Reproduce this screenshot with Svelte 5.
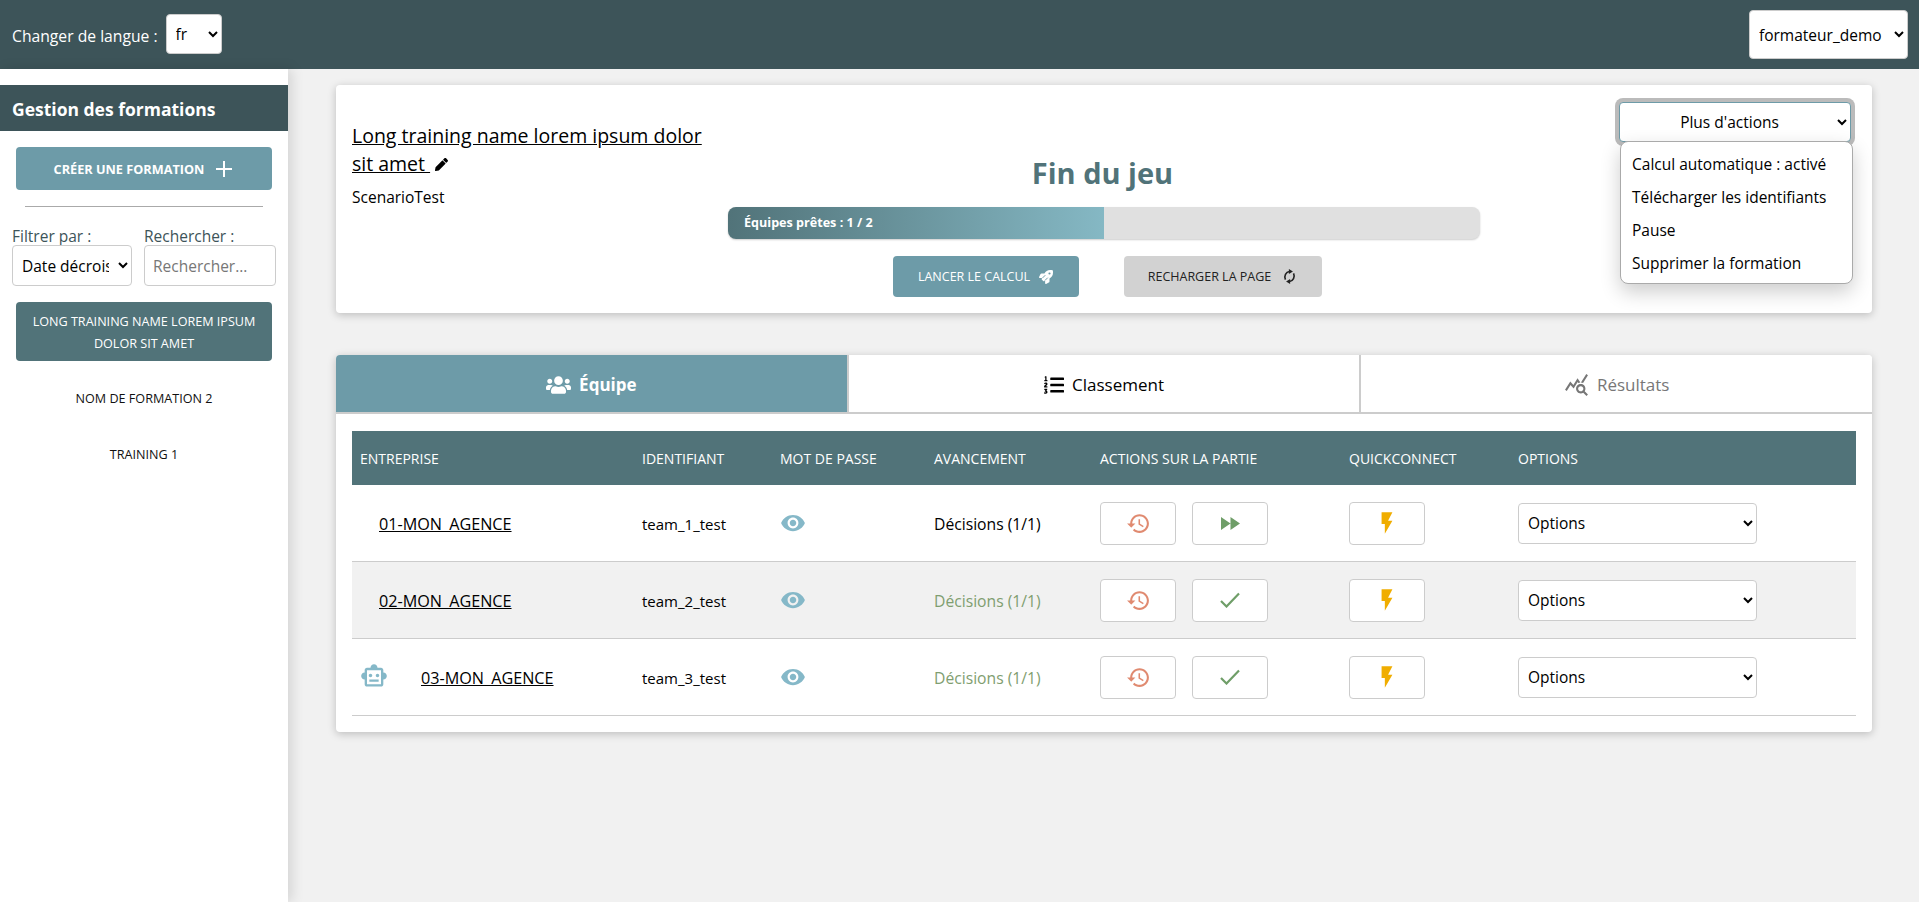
<script>
  const teams = [
    { name: '01-MON_AGENCE', id: 'team_1_test', done: false, bot: false },
    { name: '02-MON_AGENCE', id: 'team_2_test', done: true, bot: false },
    { name: '03-MON_AGENCE', id: 'team_3_test', done: true, bot: true }
  ];
  const columns = ['Entreprise', 'Identifiant', 'Mot de passe', 'Avancement', 'Actions sur la partie', 'Quickconnect', 'Options'];
  const trainings = ['Nom de formation 2', 'Training 1'];
  const menu = ['Calcul automatique : activé', 'Télécharger les identifiants', 'Pause', 'Supprimer la formation'];
  let tab = $state('team');
</script>

<div class="page">
  <header class="topbar">
    <div class="lang">
      <span>Changer de langue :</span>
      <select class="sel lang-sel"><option>fr</option><option>en</option></select>
    </div>
    <select class="sel user-sel"><option>formateur_demo</option></select>
  </header>

  <div class="body">
    <aside class="sidebar">
      <h2>Gestion des formations</h2>
      <div class="side-in">
        <button class="create">
          Créer une formation
          <svg viewBox="0 0 16 16" width="16" height="16"><path d="M8 0v16M0 8h16" stroke="#fff" stroke-width="2" fill="none"/></svg>
        </button>
        <hr />
        <div class="filters">
          <label class="f1">Filtrer par :
            <select class="sel"><option>Date décroissante</option></select>
          </label>
          <label class="f2">Rechercher :
            <input placeholder="Rechercher..." />
          </label>
        </div>
        <button class="training active">Long training name lorem ipsum dolor sit amet</button>
        {#each trainings as t}
          <button class="training">{t}</button>
        {/each}
      </div>
    </aside>

    <main>
      <section class="card head">
        <div class="info">
          <div class="name"><u>Long training name lorem ipsum dolor sit amet&nbsp;</u>
            <svg viewBox="0 0 512 512" width="13" height="13"><path d="M497.9 142.1l-46.1 46.1c-4.7 4.7-12.3 4.7-17 0l-111-111c-4.7-4.7-4.7-12.3 0-17l46.1-46.1c18.7-18.7 49.1-18.7 67.9 0l60.1 60.1c18.8 18.7 18.8 49.1 0 67.9zM284.2 99.8L21.6 362.4.4 483.9c-2.9 16.4 11.4 30.6 27.8 27.8l121.5-21.3 262.6-262.6c4.7-4.7 4.7-12.3 0-17l-111-111c-4.8-4.7-12.4-4.7-17.1 0z"/></svg>
          </div>
          <div class="scenario">ScenarioTest</div>
        </div>
        <div class="center">
          <h1>Fin du jeu</h1>
          <div class="progress">
            <div class="fill" style="width:50%">Équipes prêtes : 1 / 2</div>
          </div>
          <div class="btns">
            <button class="run">Lancer le calcul
              <svg viewBox="0 0 512 512" width="14" height="14"><path fill="#fff" d="M505.12019,19.09375c-1.18945-5.53125-6.65819-11-12.207-12.1875C460.716,0,435.507,0,410.40747,0,307.17523,0,245.26909,55.20312,199.05238,128H94.83772c-16.34763.01562-35.55658,11.875-42.88664,26.48438L2.51562,253.29688A28.4,28.4,0,0,0,0,264a24.00867,24.00867,0,0,0,24.00582,24H127.81618l-22.47457,22.46875c-11.36521,11.36133-12.99607,32.25781,0,45.25L156.24582,406.625c11.15623,11.1875,32.15619,13.15625,45.27726,0l22.47457-22.46875V488a24.00867,24.00867,0,0,0,24.00581,24,28.55934,28.55934,0,0,0,10.707-2.51562l98.72834-49.39063c14.62888-7.29687,26.50776-26.5,26.50776-42.85937V312.79688c72.59753-46.3125,128.03493-108.40626,128.03493-211.09376C512.07526,76.5,512.07526,51.29688,505.12019,19.09375ZM384.04033,168A40,40,0,1,1,424.05,128,40.02322,40.02322,0,0,1,384.04033,168Z"/><path d="M130 290L230 190M220 380L320 280" stroke="#6d9ba8" stroke-width="36"/></svg>
            </button>
            <button class="reload">Recharger la page
              <svg viewBox="0 0 24 24" width="15" height="15"><path d="M5.5 17A8.5 9 0 0 1 12 4M18.5 7A8.5 9 0 0 1 12 20" fill="none" stroke="#222" stroke-width="2.6"/><path fill="#222" d="M11 0l6.5 4-6.5 4zM13 16l-6.500 4 6.500 4z"/></svg>
            </button>
          </div>
        </div>
        <div class="more">
          <select class="sel more-sel"><option>Plus d'actions</option></select>
          <ul class="menu">
            {#each menu as m}<li>{m}</li>{/each}
          </ul>
        </div>
      </section>

      <section class="card teams">
        <div class="tabs">
          <button class="tab" class:on={tab === 'team'} onclick={() => tab = 'team'}>
            <svg viewBox="0 0 640 512" width="25" height="20"><path fill="currentColor" d="M96 224c35.3 0 64-28.7 64-64s-28.7-64-64-64-64 28.7-64 64 28.7 64 64 64zm448 0c35.3 0 64-28.7 64-64s-28.7-64-64-64-64 28.7-64 64 28.7 64 64 64zm32 32h-64c-17.6 0-33.5 7.1-45.1 18.6 40.3 22.1 68.9 62 75.1 109.4h66c17.7 0 32-14.3 32-32v-32c0-35.3-28.7-64-64-64zm-256 0c61.9 0 112-50.1 112-112S381.9 32 320 32 208 82.1 208 144s50.1 112 112 112zm76.8 32h-8.3c-20.8 10-43.9 16-68.5 16s-47.6-6-68.5-16h-8.3C179.6 288 128 339.6 128 403.2V432c0 26.5 21.5 48 48 48h288c26.5 0 48-21.5 48-48v-28.8c0-63.6-51.6-115.2-115.2-115.2zm-223.7-13.4C161.5 263.1 145.6 256 128 256H64c-35.3 0-64 28.7-64 64v32c0 17.7 14.3 32 32 32h65.9c6.3-47.4 34.9-87.3 75.2-109.4z"/></svg>
            Équipe
          </button>
          <button class="tab" class:on={tab === 'rank'} onclick={() => tab = 'rank'}>
            <svg viewBox="0 0 512 512" width="20" height="20"><path fill="currentColor" d="M61.77 401l17.5-20.15a19.92 19.92 0 0 0 5.07-14.19v-3.31C84.34 356 80.5 352 73 352H16a8 8 0 0 0-8 8v16a8 8 0 0 0 8 8h22.83a157.41 157.41 0 0 0-11 12.31l-5.61 7c-4 5.07-5.25 10.13-2.8 14.88l1.05 1.93c3 5.76 6.29 7.88 12.25 7.88h4.73c10.33 0 15.94 2.44 15.94 9.09 0 4.72-4.2 8.22-14.36 8.22a41.54 41.54 0 0 1-15.47-3.12c-6.49-3.88-11.74-3.5-15.6 3.12l-5.59 9.31c-3.72 6.13-3.19 11.72 2.63 15.94 7.71 4.69 20.38 9.44 37 9.44 34.16 0 48.5-22.75 48.5-44.12-.03-14.38-9.12-29.76-28.73-34.88zM496 224H176a16 16 0 0 0-16 16v32a16 16 0 0 0 16 16h320a16 16 0 0 0 16-16v-32a16 16 0 0 0-16-16zm0-160H176a16 16 0 0 0-16 16v32a16 16 0 0 0 16 16h320a16 16 0 0 0 16-16V80a16 16 0 0 0-16-16zm0 320H176a16 16 0 0 0-16 16v32a16 16 0 0 0 16 16h320a16 16 0 0 0 16-16v-32a16 16 0 0 0-16-16zM16 160h64a8 8 0 0 0 8-8v-16a8 8 0 0 0-8-8H64V40a8 8 0 0 0-8-8H32a8 8 0 0 0-7.14 4.42l-8 16A8 8 0 0 0 24 64h8v64H16a8 8 0 0 0-8 8v16a8 8 0 0 0 8 8zm-3.91 160H80a8 8 0 0 0 8-8v-16a8 8 0 0 0-8-8H41.32c3.29-10.29 48.34-18.68 48.34-56.44 0-29.06-25-39.56-44.47-39.56-21.36 0-33.8 10-40.46 18.75-4.37 5.59-3 10.84 2.8 15.37l8.58 6.88c5.61 4.56 11 2.47 16.12-2.44a13.44 13.44 0 0 1 9.46-3.84c3.33 0 9.28 1.56 9.28 8.75C51 248.19 0 257.31 0 304.59v4C0 316 5.08 320 12.09 320z"/></svg>
            Classement
          </button>
          <button class="tab muted" class:on={tab === 'res'} onclick={() => tab = 'res'}>
            <svg viewBox="0 0 24 24" width="25" height="25"><path fill="currentColor" d="M19.88 18.47c.44-.7.7-1.51.7-2.39 0-2.49-2.01-4.5-4.5-4.5s-4.5 2.01-4.5 4.5 2.01 4.5 4.49 4.5c.88 0 1.7-.26 2.39-.7L21.58 23 23 21.58l-3.12-3.11zm-3.8.11c-1.38 0-2.5-1.12-2.5-2.5s1.12-2.5 2.5-2.5 2.5 1.12 2.5 2.5-1.12 2.5-2.5 2.5zm-.36-8.5c-.74.02-1.45.18-2.1.45l-.55-.83-3.8 6.18-3.01-3.52-3.63 5.81L1 17l5-8 3 3.5L13 6l2.72 4.08zm2.59.5c-.64-.28-1.33-.45-2.05-.49L21.38 2 23 3.18l-4.69 7.4z"/></svg>
            Résultats
          </button>
        </div>

        <div class="table-wrap">
          <table>
            <thead>
              <tr>{#each columns as c}<th>{c}</th>{/each}</tr>
            </thead>
            <tbody>
              {#each teams as t}
                <tr>
                  <td>
                    <div class="company" class:bot={t.bot}>
                      {#if t.bot}
                        <svg viewBox="0 0 24 24" width="28" height="28"><path fill="#85b8c8" d="M20 9V7c0-1.1-.9-2-2-2h-3c0-1.66-1.34-3-3-3S9 3.34 9 5H6c-1.1 0-2 .9-2 2v2c-1.66 0-3 1.34-3 3s1.34 3 3 3v4c0 1.1.9 2 2 2h12c1.1 0 2-.9 2-2v-4c1.66 0 3-1.34 3-3s-1.34-3-3-3zm-2 10H6V7h12v12zm-9-6c-.83 0-1.5-.67-1.5-1.5S8.17 10 9 10s1.5.67 1.5 1.5S9.83 13 9 13zm7.5-1.5c0 .83-.67 1.5-1.5 1.5s-1.5-.67-1.5-1.5.67-1.5 1.5-1.5 1.5.67 1.5 1.5zM8 15h8v2H8v-2z"/></svg>
                      {/if}
                      <u>{t.name}</u>
                    </div>
                  </td>
                  <td class="tid">{t.id}</td>
                  <td>
                    <svg class="eye" viewBox="0 0 24 24" width="26" height="26"><path fill="#85b8c8" d="M12 4.5C7 4.5 2.73 7.61 1 12c1.73 4.39 6 7.5 11 7.5s9.27-3.11 11-7.5c-1.73-4.39-6-7.5-11-7.5zM12 17c-2.76 0-5-2.24-5-5s2.24-5 5-5 5 2.24 5 5-2.24 5-5 5zm0-8c-1.66 0-3 1.34-3 3s1.34 3 3 3 3-1.34 3-3-1.34-3-3-3z"/></svg>
                  </td>
                  <td class="state" class:ok={t.done}>Décisions (1/1)</td>
                  <td>
                    <div class="acts">
                      <button class="icon-btn">
                        <svg viewBox="0 0 24 24" width="25" height="25"><path fill="#e08a70" d="M13 3c-4.97 0-9 4.03-9 9H1l3.89 3.89.07.14L9 12H6c0-3.87 3.13-7 7-7s7 3.13 7 7-3.13 7-7 7c-1.93 0-3.68-.79-4.94-2.06l-1.42 1.42C8.27 19.99 10.51 21 13 21c4.97 0 9-4.03 9-9s-4.03-9-9-9zm-1 5v5l4.28 2.54.72-1.21-3.5-2.08V8H12z"/></svg>
                      </button>
                      <button class="icon-btn">
                        {#if t.done}
                          <svg viewBox="0 0 20 16" width="20" height="16"><path d="M1 9l5.5 5.5L19 1.5" fill="none" stroke="#6f9e68" stroke-width="2.2"/></svg>
                        {:else}
                          <svg viewBox="0 0 19 13" width="19" height="13"><path fill="#6f9e68" d="M0 0l9.5 6.5L0 13zM9.5 0L19 6.5 9.5 13z"/></svg>
                        {/if}
                      </button>
                    </div>
                  </td>
                  <td>
                    <button class="icon-btn">
                      <svg viewBox="0 0 24 24" width="26" height="26"><path fill="#f0ad00" d="M7 2v11h3v9l7-12h-4l4-8z"/></svg>
                    </button>
                  </td>
                  <td><select class="sel opt-sel"><option>Options</option></select></td>
                </tr>
              {/each}
            </tbody>
          </table>
        </div>
      </section>
    </main>
  </div>
</div>

<style>
  :global(body) { margin:0; background:#f1f1f1; font-family:"Open Sans","Noto Sans",sans-serif; font-size:15.5px; color:#000; }
  .page { height:902px; overflow:hidden; display:flex; flex-direction:column; }
  .topbar { height:69px; flex:none; background:#3d5459; color:#fff; display:flex; justify-content:space-between; align-items:center; padding:0 11px 0 12px; }
  .lang { display:flex; align-items:center; gap:8px; font-size:15.7px; }
  .lang span { padding-top:2px; }
  .sel { font-family:inherit; font-size:15.5px; background:#fff; border:1px solid #ccc; border-radius:4px; color:#000; padding:0 4px 0 5px; }
  .lang-sel { width:56px; height:40px; margin-top:-2px; }
  .user-sel { width:159px; height:49px; }
  .body { flex:1; display:flex; min-height:0; }
  .sidebar { width:288px; flex:none; background:#fff; box-shadow:4px 0 12px rgba(0,0,0,.12); padding-top:16px; }
  .sidebar h2 { margin:0; height:46px; line-height:48px; background:#3d5459; color:#fff; padding-left:12px; font-size:17.5px; font-weight:700; }
  .side-in { padding:16px 16px 0; display:flex; flex-direction:column; }
  button { font-family:inherit; cursor:pointer; }
  .create { height:43px; background:#6d9ba8; color:#fff; border:none; border-radius:4px; font-size:12.7px; font-weight:700; text-transform:uppercase; display:flex; align-items:center; justify-content:center; gap:12px; padding-right:8px; }
  hr { width:238px; margin:16px auto 0; border:none; border-top:1px solid #aaa; align-self:center; }
  .filters { display:flex; gap:12px; margin:20px -4px 0; color:#3d5459; font-size:15.5px; line-height:18px; }
  .filters label { display:flex; flex-direction:column; }
  .f1 { width:120px; }
  .f2 { width:132px; }
  .filters select { height:41px; width:120px; padding:0 6px 0 5px; }
  .filters input { height:41px; width:132px; box-sizing:border-box; border:1px solid #ccc; border-radius:4px; padding:0 8px; font-family:inherit; font-size:15.5px; }
  .filters input::placeholder { color:#777; }
  .training { width:256px; min-height:56px; background:none; border:none; border-radius:4px; text-transform:uppercase; color:#111; font-size:12.6px; line-height:22px; padding:4px 12px; }
  .training.active { min-height:59px; background:#517379; color:#fff; margin:16px 0 10px; padding:5px 12px 3px; }
  main { flex:1; padding:16px 47px 0 48px; min-width:0; }
  .card { background:#fff; border-radius:4px; box-shadow:0 2px 8px rgba(0,0,0,.22); }
  .head { height:228px; position:relative; display:flex; box-sizing:border-box; }
  .info { width:375px; padding:37px 0 0 16px; flex:none; box-sizing:border-box; }
  .name { font-size:19.5px; line-height:28px; }
  .scenario { margin-top:8px; font-size:15.5px; }
  .center { position:absolute; left:392px; width:752px; top:0; text-align:center; }
  .center h1 { margin:0; padding:66px 3px 0 0; font-size:29px; line-height:44px; color:#517379; font-weight:700; }
  .progress { height:32px; margin-top:12px; background:#e0e0e0; border-radius:8px; overflow:hidden; box-shadow:0 1px 2px rgba(0,0,0,.2); }
  .fill { height:100%; background:linear-gradient(90deg,#517379,#85b8c4); color:#fff; font-size:12.6px; font-weight:700; line-height:31px; text-align:left; padding-left:16px; box-sizing:border-box; }
  .btns { display:flex; justify-content:center; gap:45px; margin-top:17px; padding-left:6px; }
  .run,.reload { height:41px; border:none; border-radius:4px; font-size:12.5px; text-transform:uppercase; display:flex; align-items:center; justify-content:center; gap:9px; }
  .run { width:186px; background:#6d9ba8; color:#fff; }
  .reload { width:198px; background:#d2d2d2; color:#222; gap:11px; }
  .more { position:absolute; left:1283px; top:17px; width:232px; }
  .more-sel { width:232px; height:40px; text-align:center; border-color:#6d9ba8; box-shadow:0 0 0 4px #bbb; display:block; }
  .menu { list-style:none; margin:0 0 0 1px; padding:6px 0 0; width:233px; box-sizing:border-box; background:#fff; border:1px solid #aaa; border-radius:8px; box-shadow:0 8px 20px rgba(0,0,0,.2); position:absolute; top:39px; height:143px; }
  .menu li { height:33px; line-height:33px; padding-left:11px; font-size:15.5px; }
  .teams { margin-top:42px; height:377px; overflow:hidden; }
  .tabs { display:flex; height:59px; }
  .tab { flex:1; background:#fff; border:none; border-bottom:2px solid #ccc; border-right:2px solid #ccc; font-size:17px; color:#000; display:flex; align-items:center; justify-content:center; gap:8px; padding:2px 0 0; }
  .tab:last-child { border-right:none; }
  .tab.on { background:#6d9ba8; color:#fff; font-weight:700; }
  .tab.muted { color:#777; }
  .table-wrap { padding:17px 16px 0; }
  table { width:1504px; border-collapse:collapse; table-layout:fixed; }
  th { height:54px; box-sizing:border-box; background:#517379; color:#fff; font-weight:400; font-size:14px; text-transform:uppercase; text-align:left; padding:1px 0 0 8px; }
  th:nth-child(1) { width:282px; }
  th:nth-child(2) { width:138px; }
  th:nth-child(3) { width:154px; }
  th:nth-child(4) { width:166px; }
  th:nth-child(5) { width:249px; }
  th:nth-child(6) { width:169px; }
  td { height:76px; padding:0 0 0 8px; border-bottom:1px solid #ccc; font-size:15.7px; vertical-align:middle; }
  td.tid { font-size:15px; height:74px; padding-top:2px; }
  td.state { height:74px; padding-top:2px; }
  tbody tr:nth-child(even) { background:#f1f1f1; }
  td.ok { color:#7f9e70; }
  .company { padding:2px 0 0 19px; display:flex; align-items:center; font-size:16.2px; }
  .company.bot { padding-left:0; gap:33px; }
  .company.bot svg { margin-top:-4px; }
  .eye { display:block; }
  .acts { display:flex; gap:16px; }
  .icon-btn { width:76px; height:43px; background:#fff; border:1px solid #ccc; border-radius:4px; display:flex; align-items:center; justify-content:center; padding:0; }
  .opt-sel { width:239px; height:41px; }
</style>
